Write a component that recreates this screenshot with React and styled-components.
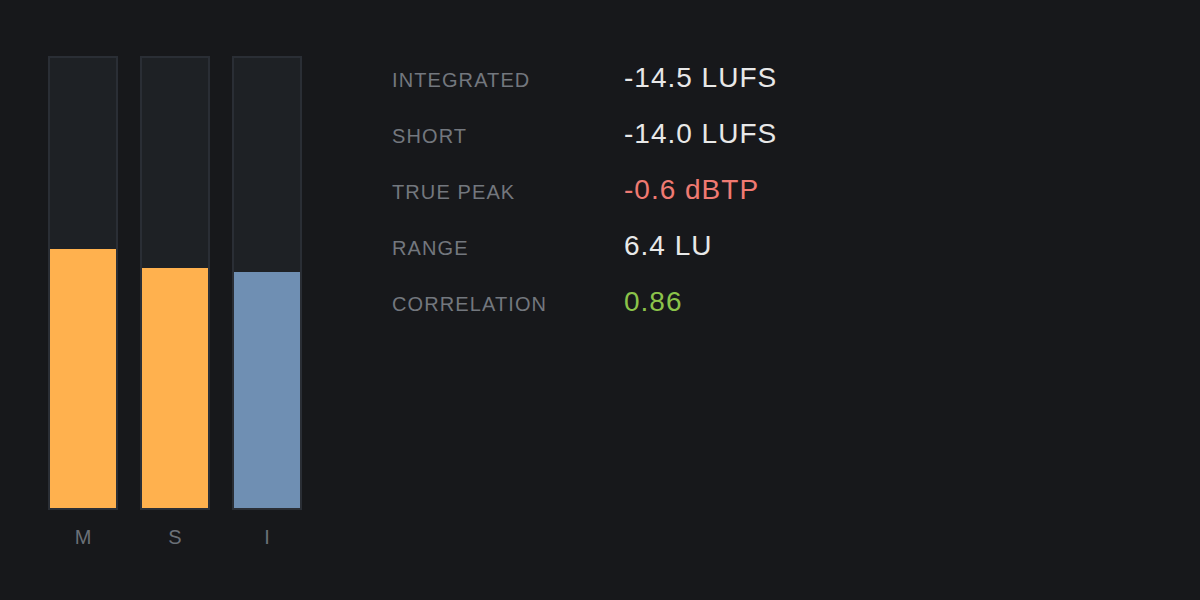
import styled, { createGlobalStyle } from "styled-components";

const GlobalStyle = createGlobalStyle`
  html, body {
    margin: 0;
    background-color: #17181b;
    font-family: "Liberation Sans", Arial, sans-serif;
  }
`;

const Page = styled.div`
  width: 1200px;
  height: 600px;
  box-sizing: border-box;
  padding: 56px 0 0 48px;
  display: flex;
  align-items: flex-start;
  gap: 90px;
  background-color: #17181b;
`;

const Meters = styled.div`
  display: flex;
  gap: 22px;
`;

const MeterColumn = styled.div`
  display: flex;
  flex-direction: column;
  align-items: center;
  gap: 16px;
`;

const MeterTrack = styled.div`
  width: 70px;
  height: 454px;
  box-sizing: border-box;
  border: 2px solid #2a2e35;
  background-color: #1e2125;
  display: flex;
  flex-direction: column;
  justify-content: flex-end;
`;

const MeterFill = styled.div`
  width: 100%;
  background-color: ${(p) => p.$color};
`;

const MeterLabel = styled.span`
  font-size: 20px;
  line-height: 22px;
  color: #6b7078;
`;

const Stats = styled.div`
  margin-top: 6px;
  display: flex;
  flex-direction: column;
  gap: 24px;
`;

const Row = styled.div`
  display: flex;
  align-items: baseline;
  height: 32px;
  line-height: 32px;
`;

const Label = styled.span`
  width: 232px;
  font-size: 20px;
  letter-spacing: 1.1px;
  color: #73777e;
`;

const Value = styled.span`
  font-size: 28px;
  letter-spacing: 1px;
  color: ${(p) => p.$color || "#e8e8e8"};
`;

const meters = [
  { label: "M", level: 259, color: "#ffb14e" },
  { label: "S", level: 240, color: "#ffb14e" },
  { label: "I", level: 236, color: "#6f8fb3" },
];

const stats = [
  { label: "INTEGRATED", value: "-14.5 LUFS" },
  { label: "SHORT", value: "-14.0 LUFS" },
  { label: "TRUE PEAK", value: "-0.6 dBTP", color: "#ef7a72" },
  { label: "RANGE", value: "6.4 LU" },
  { label: "CORRELATION", value: "0.86", color: "#8bc34a" },
];

export default function App() {
  return (
    <>
      <GlobalStyle />
      <Page>
        <Meters>
          {meters.map((m) => (
            <MeterColumn key={m.label}>
              <MeterTrack>
                <MeterFill $color={m.color} style={{ height: `${m.level}px` }} />
              </MeterTrack>
              <MeterLabel>{m.label}</MeterLabel>
            </MeterColumn>
          ))}
        </Meters>
        <Stats>
          {stats.map((s) => (
            <Row key={s.label}>
              <Label>{s.label}</Label>
              <Value $color={s.color}>{s.value}</Value>
            </Row>
          ))}
        </Stats>
      </Page>
    </>
  );
}
